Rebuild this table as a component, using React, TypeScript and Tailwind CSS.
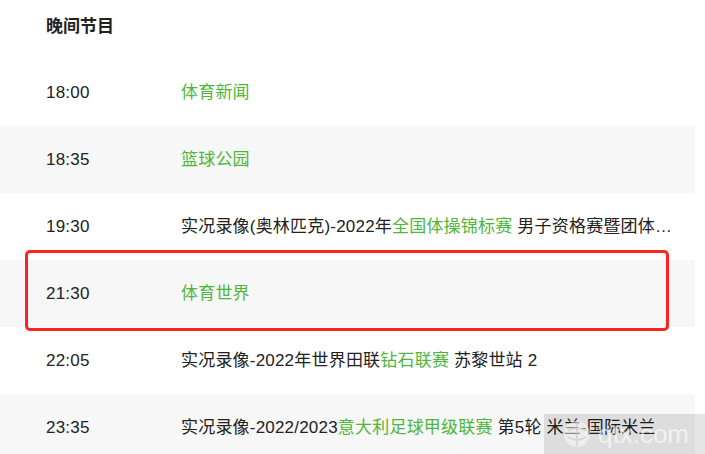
import React from 'react';

type Part = { text: string; green?: boolean };

const rows: { time: string; parts: Part[] }[] = [
  { time: '18:00', parts: [{ text: '体育新闻', green: true }] },
  { time: '18:35', parts: [{ text: '篮球公园', green: true }] },
  {
    time: '19:30',
    parts: [
      { text: '实况录像(奥林匹克)-2022年' },
      { text: '全国体操锦标赛', green: true },
      { text: ' 男子资格赛暨团体决赛' },
    ],
  },
  { time: '21:30', parts: [{ text: '体育世界', green: true }] },
  {
    time: '22:05',
    parts: [
      { text: '实况录像-2022年世界田联' },
      { text: '钻石联赛', green: true },
      { text: ' 苏黎世站 2' },
    ],
  },
  {
    time: '23:35',
    parts: [
      { text: '实况录像-2022/2023' },
      { text: '意大利足球甲级联赛', green: true },
      { text: ' 第5轮 米兰-国际米兰' },
    ],
  },
];

const App: React.FC = () => {
  return (
    <div
      className="relative h-[454px] w-[705px] overflow-hidden bg-white text-[#222]"
      style={{ fontFamily: '"Liberation Sans", "Noto Sans CJK SC", sans-serif' }}
    >
      <div className="w-[695px]">
        {/* Header */}
        <div className="flex h-[59px] items-center pb-[6px] pl-[46px]">
          <h2 className="text-[17px] font-bold">晚间节目</h2>
        </div>

        {/* Schedule */}
        {rows.map((row, i) => (
          <div
            key={row.time}
            className={`flex h-[67px] items-center text-[17px] tracking-[0.2px] ${i % 2 === 1 ? 'bg-[#f7f7f7]' : 'bg-white'}`}
          >
            <span className="w-[181px] shrink-0 pl-[46px]">{row.time}</span>
            <span className="w-[505px] truncate">
              {row.parts.map((p, j) => (
                <span key={j} className={p.green ? 'text-[#4fb63c]' : ''}>
                  {p.text}
                </span>
              ))}
            </span>
          </div>
        ))}
      </div>

      {/* Highlight annotation */}
      <div className="pointer-events-none absolute left-[25px] top-[250px] h-[81px] w-[644px] rounded-[5px] border-[3px] border-[#ff2222]" />

      {/* Watermark */}
      <div className="pointer-events-none absolute left-[544px] top-[414px] flex h-[40px] w-[161px] items-center gap-[6px] bg-black/10 pl-[18px]">
        <svg width="30" height="30" viewBox="0 0 30 30" className="opacity-70">
          <circle cx="15" cy="15" r="13" fill="white" fillOpacity="0.7" />
          <path d="M6 12 Q15 6 24 12 M6 18 Q15 24 24 18 M15 3 V27" stroke="#d8d8d8" strokeWidth="2" fill="none" />
        </svg>
        <span className="text-[26px] leading-none text-white/60">qtx.com</span>
      </div>
    </div>
  );
};

export default App;
